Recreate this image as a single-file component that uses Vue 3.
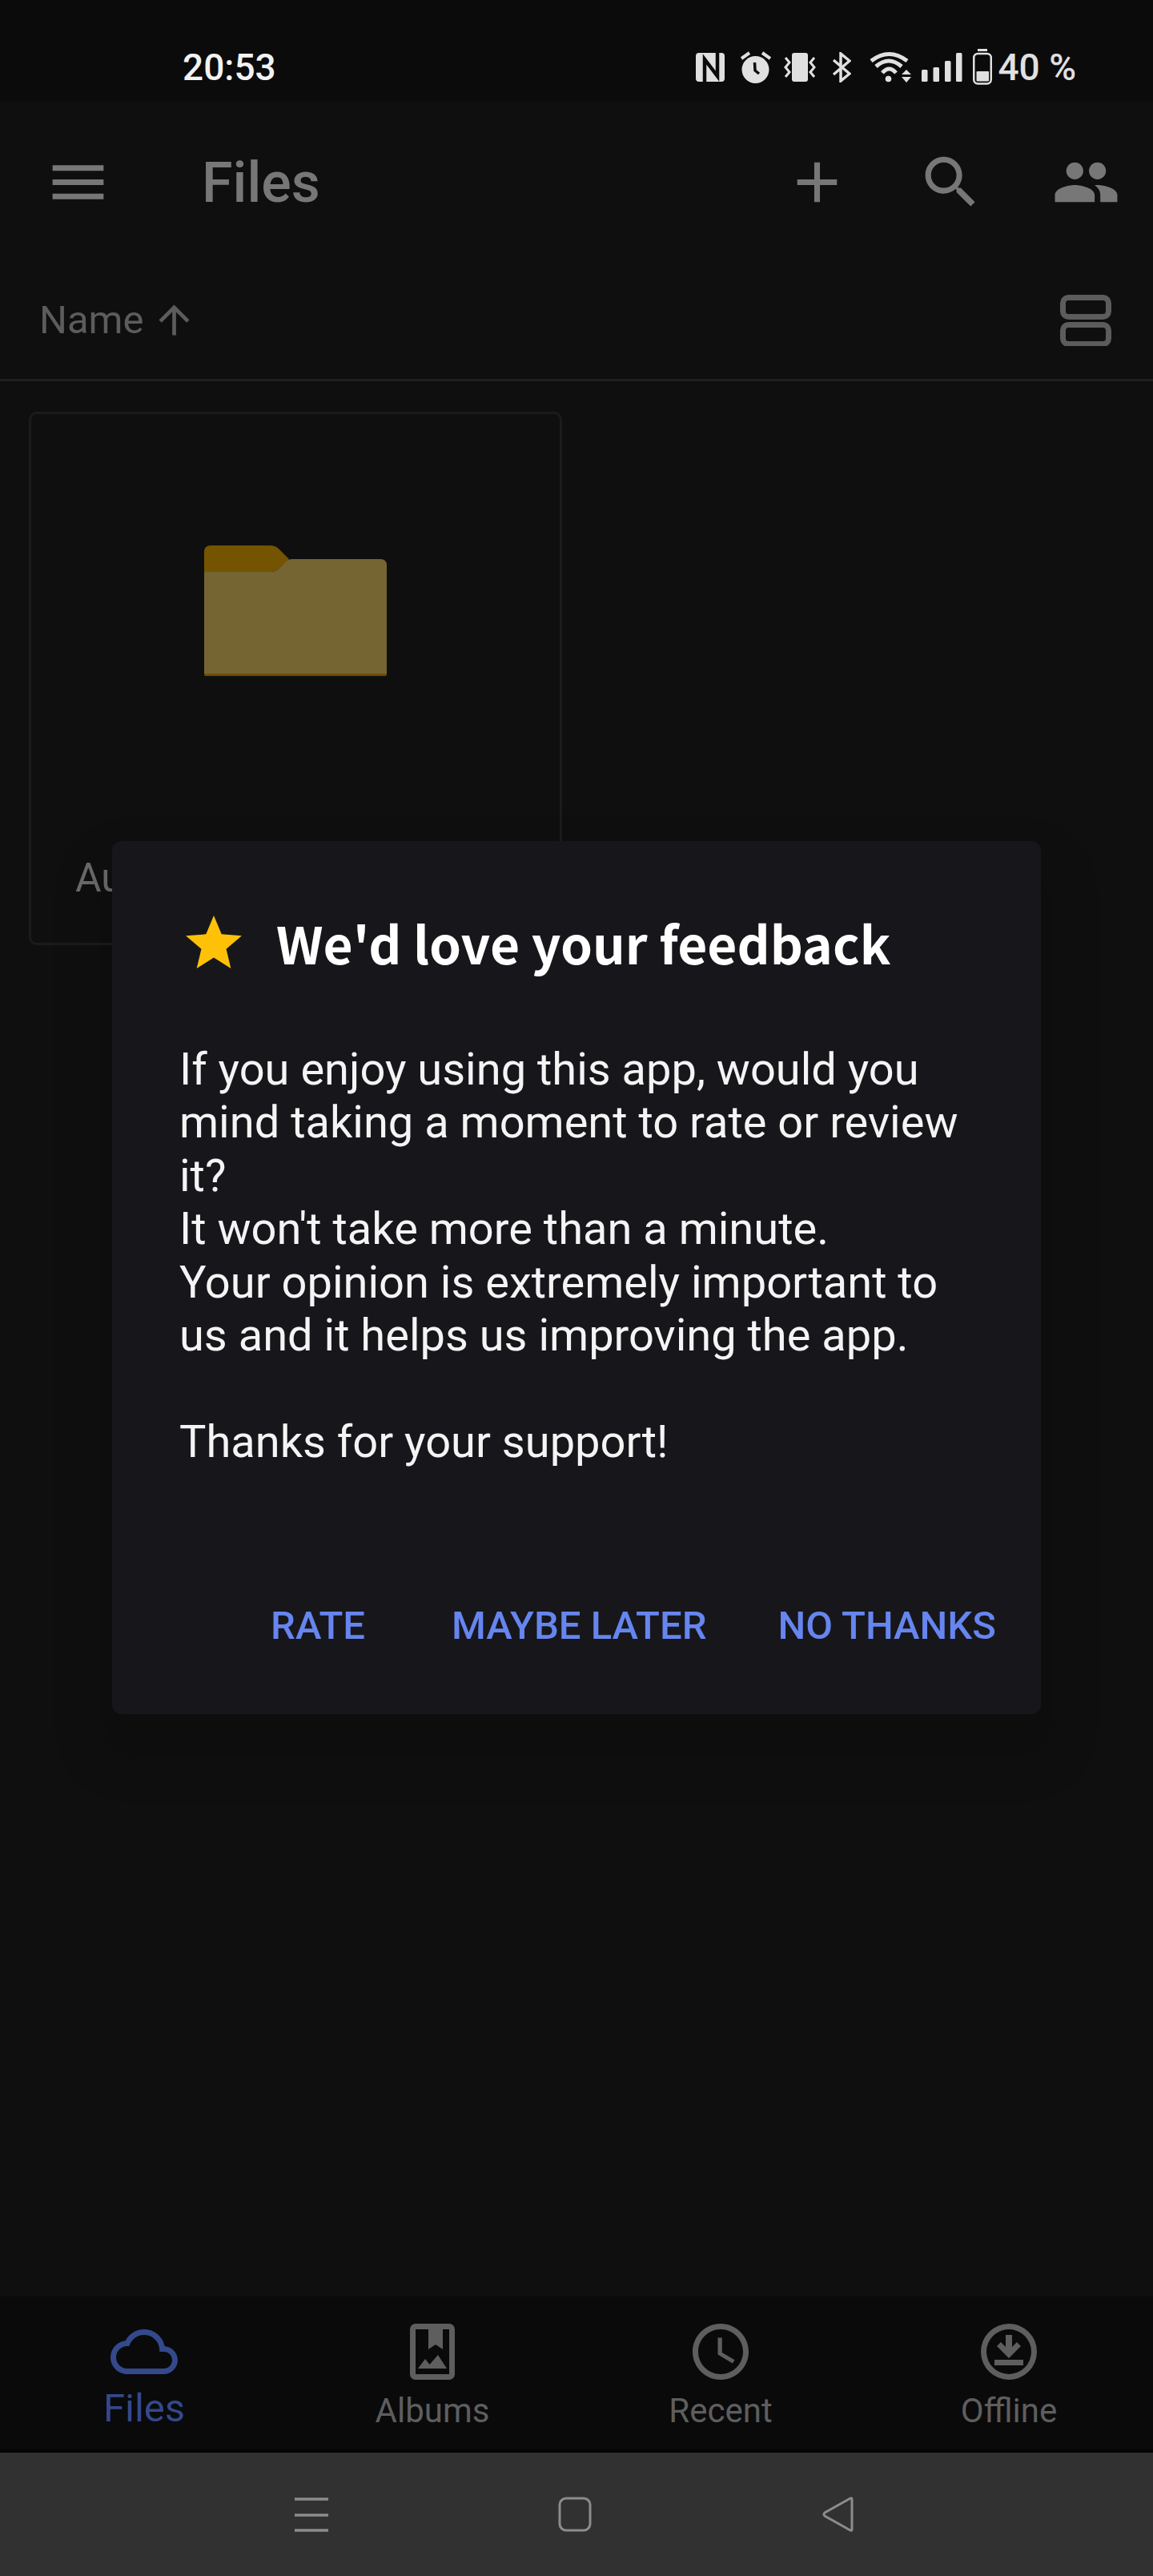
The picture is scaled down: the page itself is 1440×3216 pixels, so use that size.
<script setup>
const bodyLines = [
  'If you enjoy using this app, would you',
  'mind taking a moment to rate or review',
  'it?',
  "It won't take more than a minute.",
  'Your opinion is extremely important to',
  'us and it helps us improving the app.',
]
</script>

<template>
  <div class="screen">
    <div class="status">
      <span class="time">20:53</span>
      <div class="status-icons">
        <svg width="36" height="36" viewBox="0 0 36 36">
          <rect width="36" height="36" rx="4" fill="#e0e0e0" />
          <path d="M11 36V8l16 21V0" fill="none" stroke="#0b0b0c" stroke-width="4.500" />
        </svg>
        <svg class="s-alarm" width="38" height="40" viewBox="0 0 38 40">
          <circle cx="18.500" cy="23" r="17" fill="#e0e0e0" />
          <path d="M1 9l10-7M27 2l10 7" stroke="#e0e0e0" stroke-width="4" />
          <path d="M17.500 14l.5 10 5 4" fill="none" stroke="#0b0b0c" stroke-width="3.500" />
        </svg>
        <svg class="s-vib" width="40" height="36" viewBox="0 0 40 36">
          <rect x="10" width="20" height="36" rx="3" fill="#e0e0e0" />
          <path d="M2 6l5 6-5 6 5 6-5 6M38 6l-5 6 5 6-5 6 5 6" fill="none" stroke="#e0e0e0" stroke-width="3" />
        </svg>
        <svg class="s-bt" width="24" height="38" viewBox="0 0 24 38">
          <path d="M2 10l20 17-11 9V2l11 9L2 28" fill="none" stroke="#e0e0e0" stroke-width="3.500" />
        </svg>
        <svg class="s-wifi" width="52" height="40" viewBox="0 0 52 40">
          <path d="M2 12Q24.500-5 47 12M8 19Q24 5 40 19M16 27Q24.500 17 33 27" fill="none" stroke="#e0e0e0" stroke-width="5" />
          <circle cx="23.500" cy="34.500" r="3.800" fill="#e0e0e0" />
          <path d="M40 29l6-6 6 6zM40 32h12l-6 7z" fill="#e0e0e0" />
        </svg>
        <svg class="s-signal" width="52" height="36" viewBox="0 0 52 36">
          <rect x="1" y="21" width="7.500" height="15" rx="1.500" fill="#e0e0e0" />
          <rect x="15.500" y="18" width="7.500" height="18" rx="1.500" fill="#e0e0e0" />
          <rect x="30" y="10" width="7.500" height="26" rx="1.500" fill="#e0e0e0" />
          <rect x="44" y="0" width="7.500" height="36" rx="1.500" fill="#e0e0e0" />
        </svg>
        <svg class="s-batt" width="24" height="45" viewBox="0 0 24 45">
          <rect x="6" width="12" height="3" fill="#e0e0e0" />
          <rect x="1.250" y="6" width="21.500" height="37.500" rx="5" fill="none" stroke="#e0e0e0" stroke-width="2.500" />
          <rect x="4.500" y="28" width="15.500" height="12.500" rx="1" fill="#e0e0e0" />
        </svg>
        <span class="batt-text">40 %</span>
      </div>
    </div>

    <div class="toolbar">
      <svg class="tb-menu" width="85" height="85" viewBox="0 0 24 24"><path d="M3 18h18v-2H3v2zm0-5h18v-2H3v2zm0-7v2h18V6H3z" /></svg>
      <span class="tb-title">Files</span>
      <svg class="tb-add" width="85" height="85" viewBox="0 0 24 24"><path d="M19 13h-6v6h-2v-6H5v-2h6V5h2v6h6v2z" /></svg>
      <svg class="tb-search" width="85" height="85" viewBox="0 0 24 24"><path d="M15.500 14h-.79l-.28-.27C15.410 12.590 16 11.110 16 9.500 16 5.910 13.090 3 9.500 3S3 5.910 3 9.500 5.910 16 9.500 16c1.610 0 3.090-.59 4.230-1.570l.27.28v.79l5 4.990L20.490 19l-4.990-5zm-6 0C7.010 14 5 11.990 5 9.500S7.010 5 9.500 5 14 7.010 14 9.500 11.990 14 9.500 14z" /></svg>
      <svg class="tb-people" width="85" height="85" viewBox="0 0 24 24"><path d="M16 11c1.660 0 2.990-1.340 2.990-3S17.660 5 16 5c-1.660 0-3 1.340-3 3s1.340 3 3 3zm-8 0c1.660 0 2.990-1.340 2.990-3S9.660 5 8 5C6.340 5 5 6.340 5 8s1.340 3 3 3zm0 2c-2.330 0-7 1.170-7 3.500V19h14v-2.500c0-2.330-4.670-3.500-7-3.500zm8 0c-.29 0-.62.020-.97.050 1.160.84 1.970 1.970 1.970 3.450V19h6v-2.500c0-2.330-4.670-3.500-7-3.500z" /></svg>
    </div>

    <div class="sortbar">
      <span class="sort-name">Name</span>
      <svg class="sort-arrow" width="57" height="57" viewBox="0 0 24 24"><path d="M4 12l1.410 1.410L11 7.830V20h2V7.830l5.580 5.590L20 12l-8-8-8 8z" /></svg>
      <svg class="sort-view" width="64" height="64" viewBox="0 0 64 64">
        <rect x="3.500" y="3.500" width="57" height="24" rx="7" fill="none" stroke="#5c5c5c" stroke-width="7" />
        <rect x="3.500" y="37.500" width="57" height="24" rx="7" fill="none" stroke="#5c5c5c" stroke-width="7" />
      </svg>
    </div>

    <div class="content">
      <div class="card">
        <div class="card-thumb">
          <svg width="228" height="163" viewBox="0 0 228 163">
            <path d="M8 0h74q7 0 11 4l13 13-13 12q-4 4-11 4H0V8q0-8 8-8z" fill="#745400" />
            <path d="M0 33h82q7 0 11-4l9-9q3-3 8-3h110q8 0 8 8v135q0 3-3 3H3q-3 0-3-3z" fill="#756532" />
            <path d="M0 160h228q0 3-3 3H3q-3 0-3-3z" fill="#6e4a00" />
          </svg>
        </div>
        <div class="card-name">Auto Upload</div>
      </div>
    </div>

    <div class="bottomnav">
      <div class="nav-item active">
        <svg width="84" height="84" viewBox="0 0 24 24"><path d="M19.350 10.040C18.670 6.590 15.640 4 12 4 9.110 4 6.600 5.640 5.350 8.040 2.340 8.360 0 10.910 0 14c0 3.310 2.690 6 6 6h13c2.760 0 5-2.240 5-5 0-2.640-2.050-4.780-4.650-4.960zM19 18H6c-2.210 0-4-1.790-4-4s1.790-4 4-4h.71C7.370 7.690 9.480 6 12 6c3.040 0 5.500 2.460 5.500 5.500v.5H19c1.660 0 3 1.340 3 3s-1.340 3-3 3z" /></svg>
        <span>Files</span>
      </div>
      <div class="nav-item">
        <svg width="84" height="84" viewBox="-14 -7 84 84">
          <path fill-rule="evenodd" d="M7 0h42a7 7 0 0 1 7 7v56a7 7 0 0 1-7 7H7a7 7 0 0 1-7-7V7a7 7 0 0 1 7-7zM7 7v56h42V7h-8v25l-9-6-9 6V7zM10 56h36L35 39l-10.500 12L19 44z" />
        </svg>
        <span>Albums</span>
      </div>
      <div class="nav-item">
        <svg width="84" height="84" viewBox="0 0 24 24"><path d="M11.990 2C6.470 2 2 6.480 2 12s4.470 10 9.990 10C17.520 22 22 17.520 22 12S17.520 2 11.990 2zM12 20c-4.420 0-8-3.580-8-8s3.580-8 8-8 8 3.580 8 8-3.580 8-8 8zm.5-13H11v6l5.250 3.150.75-1.230-4.500-2.670z" /></svg>
        <span>Recent</span>
      </div>
      <div class="nav-item">
        <svg width="84" height="84" viewBox="-7 -7 84 84">
          <path fill-rule="evenodd" d="M35 0a35 35 0 1 0 0 70 35 35 0 0 0 0-70zm0 7a28 28 0 1 1 0 56 28 28 0 0 1 0-56zM31 14h8v15l6-6 5 5-15 15-15-15 5-5 6 6zM17 45h36v7H17z" />
        </svg>
        <span>Offline</span>
      </div>
    </div>

    <div class="sysbar">
      <svg width="44" height="44" viewBox="0 0 44 44">
        <path d="M1 3h42M1 23h42M1 42h42" stroke="#8c8c8c" stroke-width="3.500" />
      </svg>
      <svg width="44" height="44" viewBox="0 0 44 44">
        <rect x="3" y="2" width="38" height="40" rx="8" fill="none" stroke="#8c8c8c" stroke-width="3" />
      </svg>
      <svg width="44" height="44" viewBox="0 0 44 44">
        <path d="M39 3v38q0 2-2 1L5 24q-2-2 0-4L37 2q2-1 2 1z" fill="none" stroke="#8c8c8c" stroke-width="3" />
      </svg>
    </div>

    <div class="dialog">
      <div class="dialog-title">
        <svg width="70" height="66" viewBox="0 0 72 68"><path d="M36 0l10 24 26 2-20 17 6 25-22-14-22 14 6-25L0 26l26-2z" fill="#ffc107" /></svg>
        <h2>We'd love your feedback</h2>
      </div>
      <div class="dialog-body">
        <p v-for="line in bodyLines" :key="line">{{ line }}</p>
        <p class="spacer"></p>
        <p>Thanks for your support!</p>
      </div>
      <div class="dialog-actions">
        <span class="act-rate">RATE</span>
        <span class="act-later">MAYBE LATER</span>
        <span>NO THANKS</span>
      </div>
    </div>
  </div>
</template>

<style>
html,
body {
  margin: 0;
  background: #0f0f10;
}
</style>

<style scoped>
.screen {
  position: relative;
  width: 1440px;
  height: 3216px;
  display: flex;
  flex-direction: column;
  overflow: hidden;
  background: #0f0f10;
  font-family: Roboto, "Noto Sans", sans-serif;
}

.status {
  height: 127px;
  flex: none;
  display: flex;
  align-items: center;
  padding: 40px 96px 0 228px;
  box-sizing: border-box;
  background: #0b0b0c;
}
.time {
  font-size: 46px;
  font-weight: 500;
  color: #f2f2f2;
}
.status-icons {
  margin-left: auto;
  display: flex;
  align-items: center;
  color: #e0e0e0;
}
.status-icons svg {
  flex: none;
}
.s-alarm {
  margin-left: 20px;
}
.s-vib {
  margin-left: 16px;
}
.s-bt {
  margin-left: 20px;
}
.s-wifi {
  margin-left: 23px;
}
.s-signal {
  margin-left: 12px;
}
.s-batt {
  margin-left: 13px;
}
.batt-text {
  margin-left: 7px;
  font-size: 46px;
  font-weight: 500;
}

.toolbar {
  height: 173px;
  flex: none;
  display: flex;
  align-items: center;
  padding: 28px 41px 0 55px;
  box-sizing: border-box;
}
.toolbar svg {
  fill: #777;
  flex: none;
}
.tb-title {
  margin-left: 112px;
  font-size: 70px;
  font-weight: 500;
  color: #777;
}
.tb-add {
  margin-left: auto;
}
.tb-search {
  margin-left: 82px;
}
.tb-people {
  margin-left: 84px;
}

.sortbar {
  height: 176px;
  flex: none;
  display: flex;
  align-items: center;
  padding: 26px 52px 0 49px;
  border-bottom: 3px solid #1e1f20;
  box-sizing: border-box;
  color: #5c5c5c;
}
.sort-name {
  font-size: 49px;
}
.sort-arrow {
  margin-left: 9px;
  fill: #5c5c5c;
}
.sort-view {
  margin-left: auto;
}

.content {
  flex: 1;
  padding: 38px 36px 0;
}
.card {
  width: 666px;
  height: 666px;
  box-sizing: border-box;
  border: 3px solid #1a1b1c;
  border-radius: 10px;
  display: flex;
  flex-direction: column;
}
.card-thumb {
  height: 490px;
  display: flex;
  justify-content: center;
  align-items: center;
}
.card-name {
  padding: 60px 0 0 55px;
  font-size: 50px;
  color: #6b6b6b;
}

.bottomnav {
  height: 195px;
  flex: none;
  display: flex;
  background: #0a0a0b;
  border-bottom: 4px solid #050505;
  box-sizing: border-box;
}
.nav-item {
  flex: 1;
  display: flex;
  flex-direction: column;
  align-items: center;
  padding-top: 27px;
  color: #5e5e5e;
  font-size: 42px;
  line-height: 56px;
}
.nav-item span {
  margin-top: 4px;
}
.nav-item svg {
  fill: #5e5e5e;
  flex: none;
}
.nav-item.active {
  color: #34488c;
  font-size: 49px;
  line-height: 50px;
}
.nav-item.active svg {
  fill: #34488c;
}

.sysbar {
  height: 154px;
  flex: none;
  display: flex;
  align-items: center;
  justify-content: center;
  gap: 285px;
  padding-right: 4px;
  background: #313131;
}

.dialog {
  position: absolute;
  left: 140px;
  top: 1050px;
  width: 1160px;
  height: 1090px;
  box-sizing: border-box;
  padding: 92px 56px 0 84px;
  background: #17171b;
  border-radius: 12px;
  box-shadow: 0 40px 60px 20px rgba(0, 0, 0, 0.12);
}
.dialog-title {
  display: flex;
  align-items: center;
  gap: 43px;
  margin-left: 8px;
  height: 68px;
}
.dialog-title h2 {
  margin: 0;
  font-family: "Noto Sans CJK SC", "Noto Sans", sans-serif;
  font-size: 64px;
  font-weight: 700;
  color: #fff;
}
.dialog-body {
  margin-top: 92px;
  font-size: 56px;
  line-height: 66.4px;
  color: #f4f4f4;
}
.dialog-body p {
  margin: 0;
  white-space: nowrap;
}
.spacer {
  height: 66.4px;
}
.dialog-actions {
  margin-top: 168px;
  display: flex;
  justify-content: flex-end;
  font-size: 49px;
  font-weight: 500;
  color: #6685ef;
}
.act-rate {
  margin-right: 108px;
}
.act-later {
  margin-right: 89px;
}
</style>
